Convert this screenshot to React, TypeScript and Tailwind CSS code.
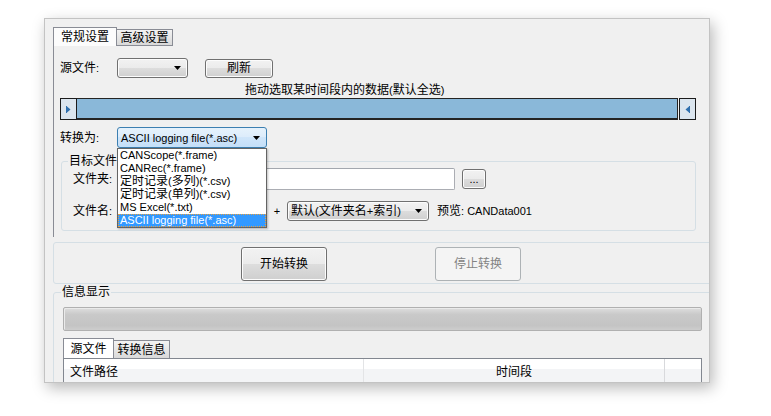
import React from "react";

const CJK_RUN = /[\u3000-\u9fff\uff00-\uffef]+|[^\u3000-\u9fff\uff00-\uffef]+/g;
const IS_CJK = /[\u3000-\u9fff\uff00-\uffef]/;

// Tahoma 8pt for latin, SimSun 9pt for hanzi, like the original dialog
function Mix({ text }: { text: string }) {
  const parts = text.match(CJK_RUN) ?? [];
  return (
    <>
      {parts.map((p, i) =>
        IS_CJK.test(p) ? (
          <span key={i} className="text-[12px]">
            {p}
          </span>
        ) : (
          <span key={i} className="text-[11px]">
            {p}
          </span>
        )
      )}
    </>
  );
}

function Arrow() {
  return (
    <svg width="7" height="4" viewBox="0 0 7 4">
      <polygon points="0,0 7,0 3.5,4" fill="#000" />
    </svg>
  );
}

const btn =
  "rounded-[3px] border border-[#707070] bg-[linear-gradient(to_bottom,#f2f2f2_0%,#ebebeb_50%,#dddddd_50%,#cfcfcf_100%)] shadow-[inset_0_0_0_1px_#fcfcfc] flex items-center justify-center";

function Combo({ className, text, focus }: { className: string; text?: string; focus?: boolean }) {
  return (
    <div
      className={`${className} flex items-center justify-between rounded-[3px] border pl-[3px] pr-[6px] ${
        focus
          ? "border-[#3c7fb1] bg-[linear-gradient(to_bottom,#e6f2fc_0%,#dcecfb_50%,#cfe5fa_50%,#c4dff8_100%)]"
          : "border-[#707070] bg-[linear-gradient(to_bottom,#f2f2f2_0%,#ebebeb_50%,#dddddd_50%,#cfcfcf_100%)] shadow-[inset_0_0_0_1px_#fcfcfc]"
      }`}
    >
      <span className="whitespace-nowrap">{text ? <Mix text={text} /> : null}</span>
      <Arrow />
    </div>
  );
}

const options = [
  "CANScope(*.frame)",
  "CANRec(*.frame)",
  "定时记录(多列)(*.csv)",
  "定时记录(单列)(*.csv)",
  "MS Excel(*.txt)",
  "ASCII logging file(*.asc)",
];

export default function App() {
  return (
    <div className="w-[771px] h-[416px] overflow-hidden bg-white pl-[44px] pt-[18px] text-[12px] leading-[14px] text-black font-['Liberation_Sans','Noto_Sans_CJK_SC',sans-serif]">
      <div className="relative w-[666px] h-[365px] overflow-hidden border border-[#c3c3c3] bg-[#f0f0f0] shadow-[3px_5px_14px_rgba(0,0,0,0.28)]">
        <div className="pl-[8px] pt-[8px]">
          {/* tabs */}
          <div className="flex items-end h-[19px]">
            <div className="w-[64px] h-[19px] border border-b-0 border-[#898c95] bg-[#fcfcfc] flex items-center justify-center">
              常规设置
            </div>
            <div className="w-[56px] h-[17px] border border-l-0 border-[#898c95] bg-[linear-gradient(to_bottom,#f3f3f3,#d9d9d9)] flex items-center justify-center">
              高级设置
            </div>
          </div>

          {/* general settings panel */}
          <div className="h-[191px] border-l border-[#898c95] pl-[6px] pt-[12px]">
            <div className="flex items-center h-[20px]">
              <div className="w-[57px]">
                <Mix text="源文件:" />
              </div>
              <Combo className="w-[71px] h-[20px]" />
              <div className={`${btn} ml-[17px] w-[68px] h-[19px]`}>刷新</div>
            </div>

            <div className="mt-[5px] ml-[185px] h-[15px] leading-[15px] whitespace-nowrap">
              <Mix text="拖动选取某时间段内的数据(默认全选)" />
            </div>

            <div className="flex h-[22px] w-[636px]">
              <div className="w-[17px] h-full border border-[#1b1b1b] bg-[#dbe5ee] flex items-center justify-center">
                <svg width="5" height="7" viewBox="0 0 5 7">
                  <rect x="0" y="0" width="1" height="7" fill="#2f6fae" />
                  <polygon points="1,0.5 4.5,3.5 1,6.5" fill="#2f6fae" />
                </svg>
              </div>
              <div className="flex-1 h-full border-t border-r border-b-2 border-[#242424] bg-[#8ab8d9]" />
              <div className="ml-[1px] w-[17px] h-full border border-[#1b1b1b] bg-[#dbe5ee] flex items-center justify-center">
                <svg width="5" height="7" viewBox="0 0 5 7">
                  <polygon points="4,0.5 0.5,3.5 4,6.5" fill="#2f6fae" />
                  <rect x="4" y="0" width="1" height="7" fill="#2f6fae" />
                </svg>
              </div>
            </div>

            <div className="mt-[7px] flex items-center h-[21px]">
              <div className="w-[57px]">
                <Mix text="转换为:" />
              </div>
              <Combo className="w-[150px] h-[21px]" text="ASCII logging file(*.asc)" focus />
            </div>

            <fieldset className="mt-[6px] ml-[1px] w-[635px] rounded-[3px] border border-[#d5dfe5] pb-[9px]">
              <legend className="ml-[6px] px-[1px] leading-[14px]">目标文件</legend>
              <div className="pl-[11px]">
                <div className="flex items-center h-[22px]">
                  <div className="w-[44px]">
                    <Mix text="文件夹:" />
                  </div>
                  <div className="w-[338px] h-[22px] rounded-[2px] border border-[#abadb3] border-t-[#a3a7ae] bg-white" />
                  <div className={`${btn} ml-[7px] w-[24px] h-[20px] text-[11px]`}>...</div>
                </div>
                <div className="mt-[11px] flex items-center h-[20px]">
                  <div className="w-[44px]">
                    <Mix text="文件名:" />
                  </div>
                  <Combo className="w-[150px] h-[20px]" />
                  <div className="ml-[6px] w-[8px] text-center text-[11px]">+</div>
                  <Combo className="ml-[6px] w-[142px] h-[20px]" text="默认(文件夹名+索引)" />
                  <div className="ml-[8px] whitespace-nowrap">
                    <Mix text="预览: CANData001" />
                  </div>
                </div>
              </div>
            </fieldset>
          </div>

          {/* convert buttons */}
          <div className="mt-[5px] w-[660px] h-[42px] rounded-[3px] border border-[#d5dfe5] flex items-start pt-[4px]">
            <div className={`${btn} ml-[187px] w-[86px] h-[34px]`}>开始转换</div>
            <div className="ml-[108px] w-[86px] h-[34px] rounded-[3px] border border-[#adb2b5] bg-[#f4f4f4] text-[#838383] flex items-center justify-center">
              停止转换
            </div>
          </div>

          {/* info */}
          <fieldset className="mt-[1px] w-[660px] h-[120px] rounded-[3px] border border-[#d5dfe5]">
            <legend className="ml-[7px] px-[1px] leading-[14px]">信息显示</legend>
            <div className="ml-[9px] mt-[8px] w-[639px] h-[24px] rounded-[2px] border border-[#b0b0b0] bg-[linear-gradient(to_bottom,#dedede_0%,#c9c9c9_30%,#c4c4c4_80%,#cdcdcd_100%)] shadow-[inset_1px_1px_0_#eaeaea]" />

            <div className="ml-[9px] mt-[7px] flex items-end h-[20px]">
              <div className="w-[51px] h-[20px] border border-b-0 border-[#898c95] bg-white flex items-center justify-center">
                源文件
              </div>
              <div className="w-[56px] h-[18px] border border-l-0 border-b-0 border-[#898c95] bg-[linear-gradient(to_bottom,#f3f3f3,#d9d9d9)] flex items-center justify-center">
                转换信息
              </div>
            </div>
            <div className="ml-[9px] w-[639px] border border-[#828790] bg-white">
              <div className="flex h-[26px] bg-[linear-gradient(to_bottom,#ffffff_0%,#ffffff_40%,#f3f4f6_40%,#f3f4f6_100%)]">
                <div className="w-[300px] pl-[6px] flex items-center border-r border-[#e3e4e6]">文件路径</div>
                <div className="w-[301px] flex items-center justify-center border-r border-[#d8d9dc]">时间段</div>
                <div className="flex-1" />
              </div>
            </div>
          </fieldset>
        </div>

        {/* open drop-down list of 转换为 */}
        <div className="absolute left-[72px] top-[129px] w-[150px] h-[80px] border border-[#646464] bg-white shadow-[1px_1px_2px_rgba(0,0,0,0.25)]">
          {options.map((o, i) =>
            i === options.length - 1 ? (
              <div
                key={o}
                className="h-[13px] leading-[11px] pl-[1px] whitespace-nowrap overflow-hidden bg-[#3399ff] text-white border border-dotted border-[#e8a040]"
              >
                <Mix text={o} />
              </div>
            ) : (
              <div key={o} className="h-[13px] leading-[13px] pl-[2px] whitespace-nowrap overflow-hidden">
                <Mix text={o} />
              </div>
            )
          )}
        </div>
      </div>
    </div>
  );
}
